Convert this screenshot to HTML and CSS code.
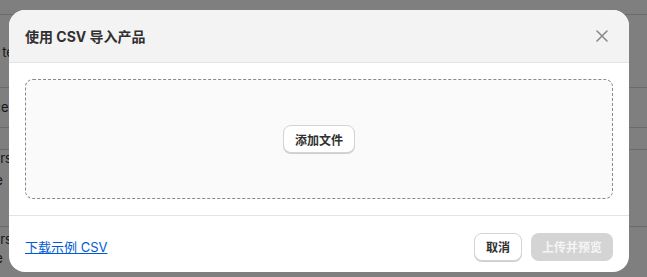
FILE: index.html
```html
<!DOCTYPE html>
<html lang="zh">
<head>
<meta charset="utf-8">
<link rel="stylesheet" href="styles.css">
</head>
<body>
<div class="page">
  <div class="band"></div>
  <div class="row r1"><p>Plain<br>Shirt te</p></div>
  <div class="row r2"><p>Success</p></div>
  <div class="row r3"></div>
  <div class="row r4"><p>Orders<br>Unde</p></div>
  <div class="row r5"><p>Orders<br>Unde</p></div>
</div>
<div class="overlay">
  <div class="modal">
    <div class="modal-header">
      <h2 class="title">使用 CSV 导入产品</h2>
      <button class="close" aria-label="关闭">
        <svg width="14" height="14" viewBox="0 0 14 14"><path d="M2 2L12 12M12 2L2 12" stroke="#8a8a8a" stroke-width="1.6" stroke-linecap="round"/></svg>
      </button>
    </div>
    <div class="modal-body">
      <div class="dropzone">
        <button class="btn add">添加文件</button>
      </div>
    </div>
    <div class="modal-footer">
      <a class="link" href="#">下载示例 CSV</a>
      <div class="actions">
        <button class="btn cancel">取消</button>
        <button class="btn primary" disabled>上传并预览</button>
      </div>
    </div>
  </div>
</div>
</body>
</html>
```
FILE: styles.css
```css
* { box-sizing: border-box; }
html, body { margin: 0; padding: 0; }
body {
  width: 647px;
  height: 277px;
  overflow: hidden;
  font-family: Inter, "Noto Sans CJK SC", "Noto Sans", sans-serif;
  background: #ffffff;
  position: relative;
}
.page {
  display: flex;
  flex-direction: column;
  color: #303030;
  font-size: 13px;
}
.page p { margin: 0; line-height: 20px; margin-left: -30px; white-space: nowrap; }
.band { height: 15px; border-bottom: 1px solid #d6d6d6; }
.row { border-bottom: 1px solid #d6d6d6; }
.r1 { height: 73px; padding-top: 7px; }
.r2 { height: 40px; padding-top: 9px; }
.r3 { height: 22px; }
.r4 { height: 77px; padding-top: 0; }
.r5 { height: 60px; padding-top: 3px; }
.r4 p { line-height: 22px; margin-top: -3px; }
.r5 p { line-height: 19px; }
.overlay {
  position: absolute;
  inset: 0;
  background: rgba(0, 0, 0, 0.5);
  padding: 10px 18px 0 9px;
}
.modal {
  background: #ffffff;
  border-radius: 16px;
  height: 262px;
  overflow: hidden;
  display: flex;
  flex-direction: column;
}
.modal-header {
  background: #f3f3f3;
  height: 53px;
  border-bottom: 1px solid #e3e3e3;
  display: flex;
  align-items: center;
  justify-content: space-between;
  padding: 0 16px;
}
.title {
  margin: 0;
  font-size: 14px;
  font-weight: 650;
  color: #303030;
}
.close {
  border: 0;
  background: transparent;
  padding: 4px;
  display: flex;
  cursor: pointer;
}
.modal-body {
  padding: 16px;
  border-bottom: 1px solid #e3e3e3;
}
.dropzone {
  height: 120px;
  border: 1px dashed #8a8a8a;
  border-radius: 8px;
  background: #fafafa;
  display: flex;
  align-items: center;
  justify-content: center;
}
.btn {
  font-family: Inter, "Noto Sans CJK SC", sans-serif;
  font-size: 12px;
  font-weight: 650;
  height: 28px;
  border-radius: 8px;
  padding: 0 11px;
  white-space: nowrap;
  cursor: pointer;
}
.add, .cancel {
  background: #ffffff;
  color: #303030;
  border: 1px solid #d4d4d4;
  box-shadow: 0 1px 0 #cfcfcf;
}
.primary {
  background: #d4d4d4;
  color: #f5f5f5;
  border: 0;
  padding: 0 11px;
}
.modal-footer {
  flex: 1;
  display: flex;
  align-items: center;
  justify-content: space-between;
  padding: 5px 16px 0 16px;
}
.link {
  color: #005bd3;
  font-size: 13px;
  text-decoration: underline;
}
.actions { display: flex; gap: 9px; }
```
